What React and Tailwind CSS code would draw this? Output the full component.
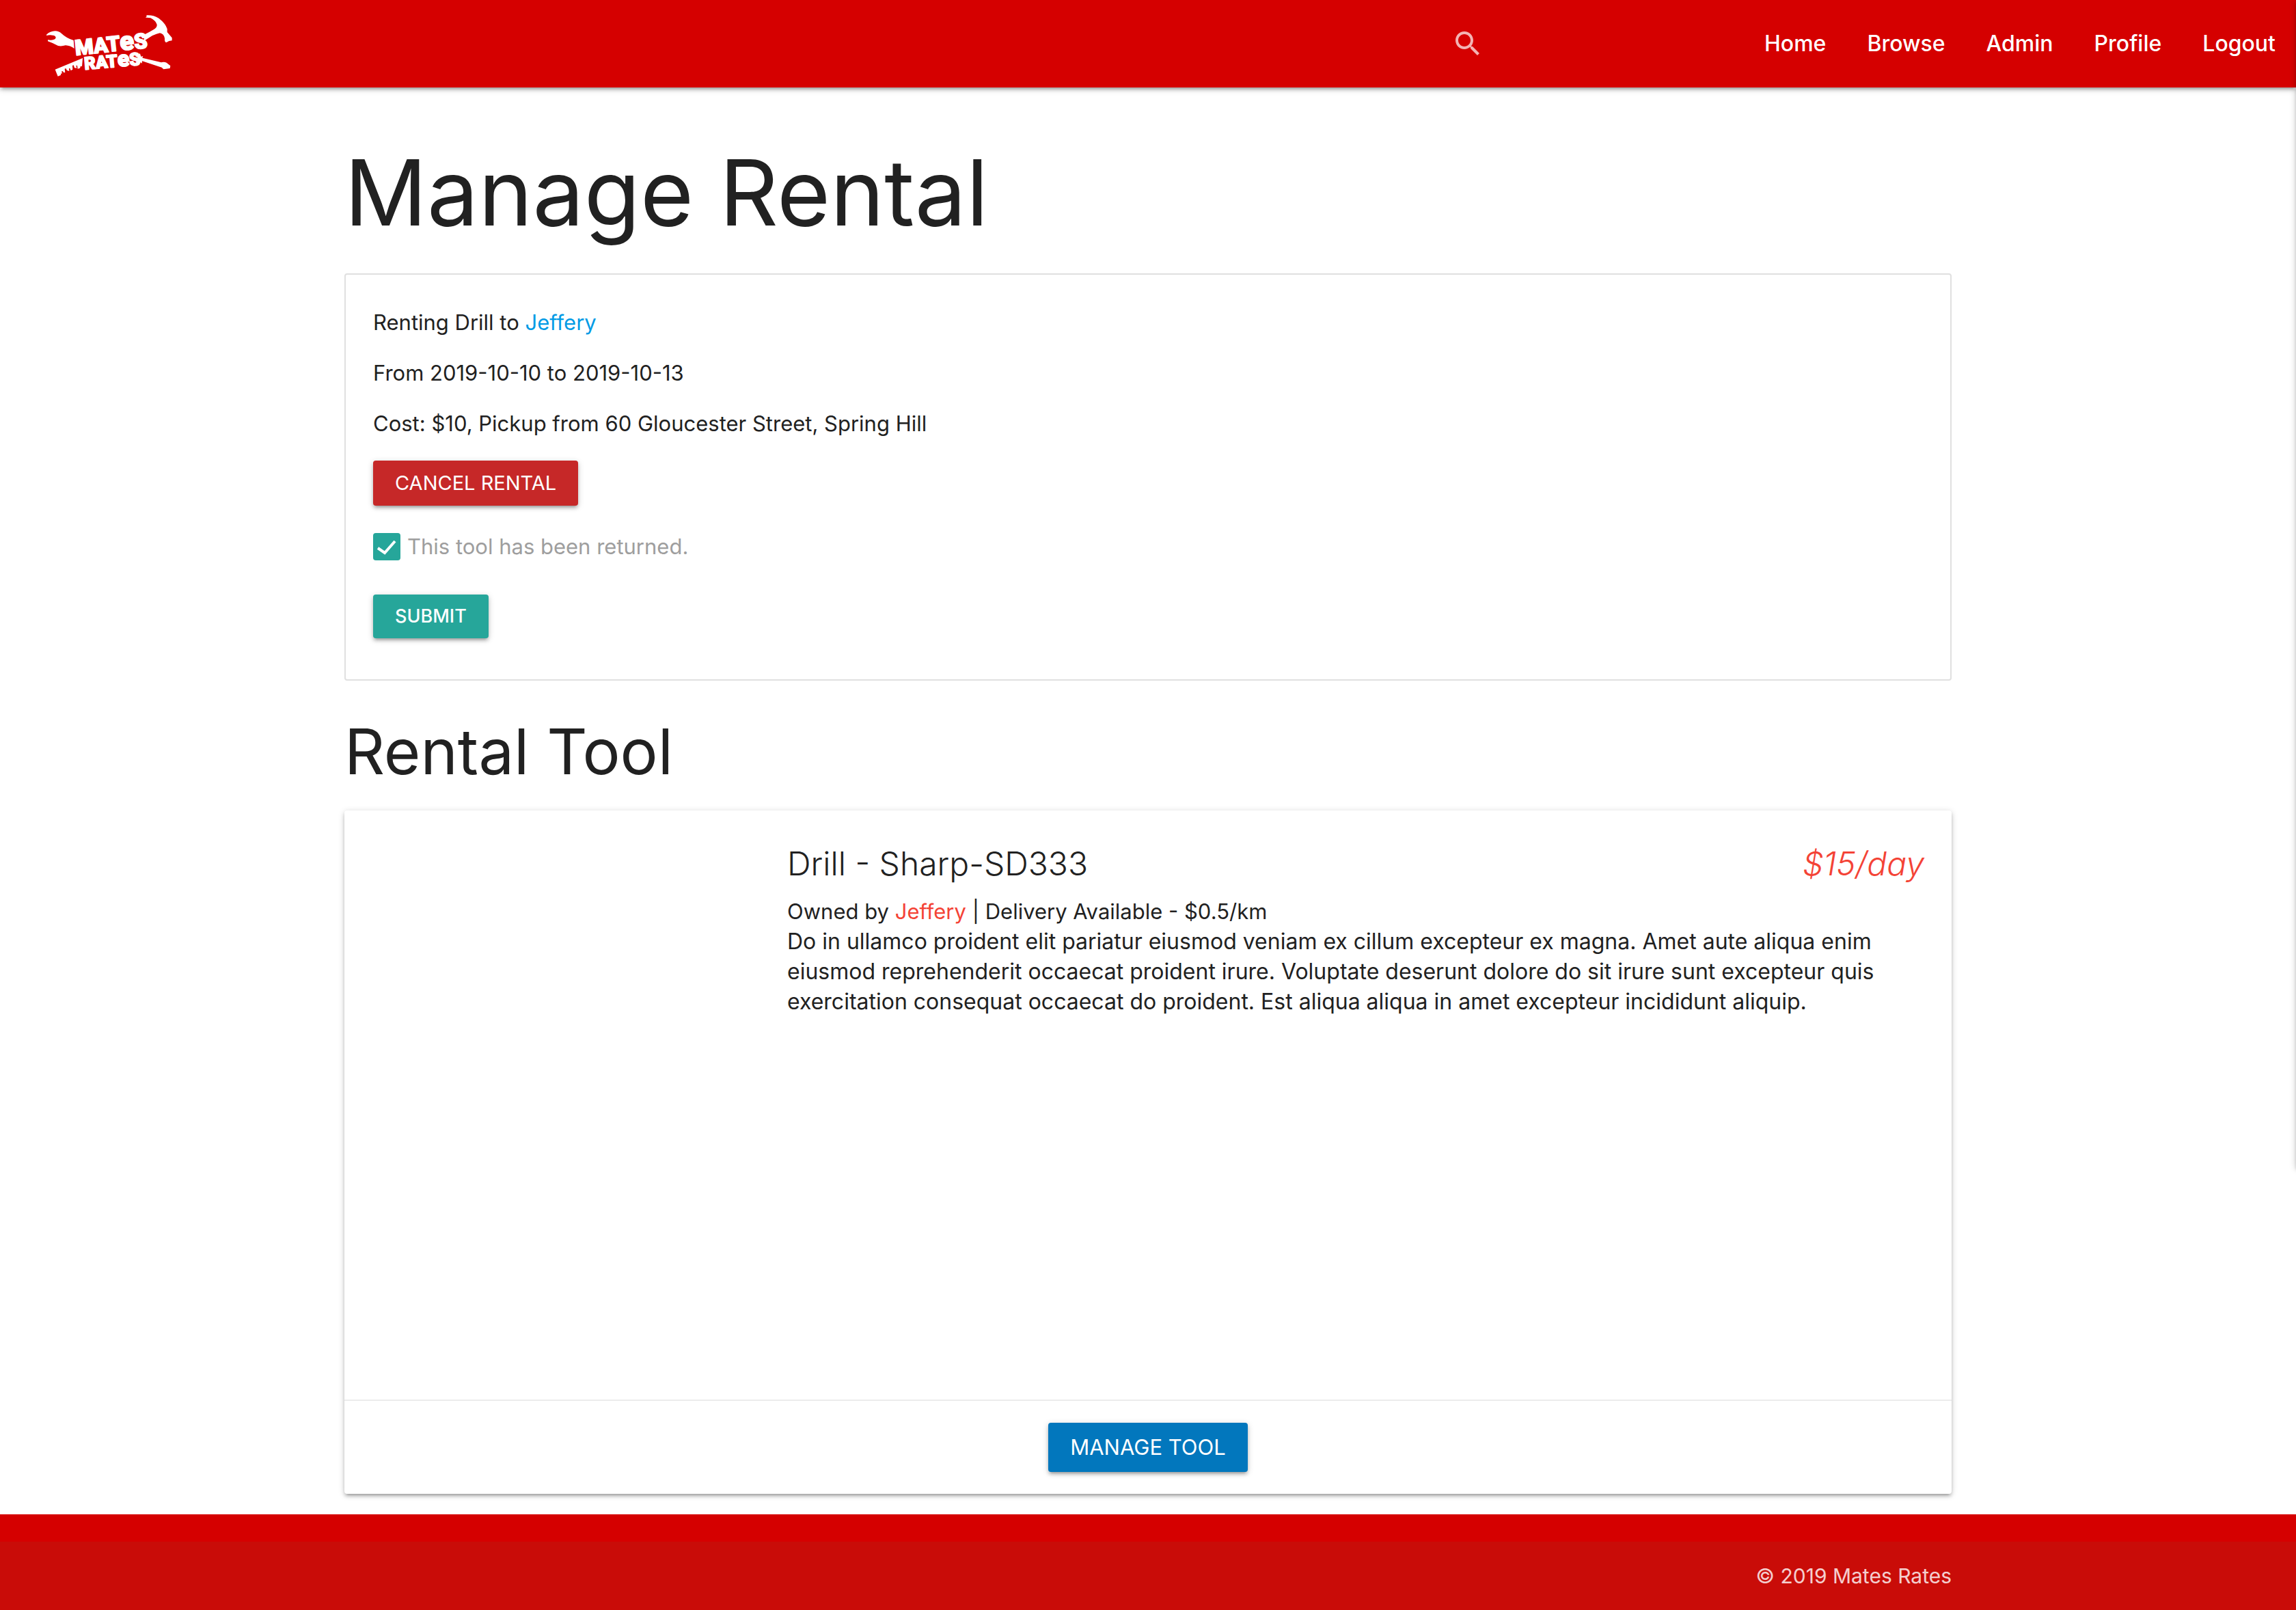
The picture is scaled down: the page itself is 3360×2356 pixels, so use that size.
const navLinks = ["Home", "Browse", "Admin", "Profile", "Logout"];

const raised =
  "shadow-[0_4px_4px_rgba(0,0,0,0.14),0_6px_2px_-4px_rgba(0,0,0,0.12),0_2px_10px_rgba(0,0,0,0.2)]";

function Logo() {
  return (
    <svg viewBox="60 42 600 300" className="h-[100px] w-[200px]" fill="#fff" role="img" aria-label="Mates Rates">
      {/* wrench */}
      <path d="M84 152 Q100 137 122 136 Q138 136 150 147 Q172 168 203 177 L206 213 Q188 200 168 199 Q150 204 135 201 Q110 188 90 181 L90 175 Q105 178 115 174 Q125 171 125 164 Q122 155 112 155 Q98 152 84 156 Z" />
      {/* hammer */}
      <path d="M523 67 Q552 65 577 80 Q607 103 614 127 L614 141 L635 166 L635 178 L622 180 L611 186 Q602 187 603 168 Q600 149 582 145 Q568 148 548 157 L512 180 L513 152 Q537 140 557 128 Q570 120 569 108 Q563 90 541 79 L525 77 L519 77 L524 72 Z" />
      {/* ruler */}
      <path d="M122 305 L243 255 L240 292 L234 290 L231 299 L221 302 L219 287 L214 289 L217 299 L207 298 L203 286 L198 288 L199 305 L191 310 L187 300 L183 300 L184 312 L174 309 L169 300 L164 302 L166 318 L160 319 L155 312 L150 314 L153 322 L146 324 L148 329 L134 335 Z" />
      {/* screwdriver */}
      <path d="M480 245 L490 243 L494 233 L499 248 L508 247 L505 254 L588 274 Q599 270 611 275 L628 289 L626 300 L598 304 L590 296 L504 268 L503 278 L495 272 L490 284 L483 281 L487 262 Z" />
      <g fontFamily="Roboto, sans-serif" fontWeight="900" stroke="#fff" strokeWidth="5" strokeLinejoin="round">
        <text transform="translate(212 243) rotate(-6)" fontSize="93">
          MAT<tspan fontSize="114">e</tspan>S
        </text>
        <text transform="translate(252 306) rotate(-5)" fontSize="77">
          RAT<tspan fontSize="96">e</tspan>S
        </text>
      </g>
    </svg>
  );
}

function Header() {
  return (
    <header className={`relative flex h-32 items-center bg-[#d50000] pl-[60px] text-white ${raised}`}>
      <a href="#home">
        <Logo />
      </a>
      <form className="ml-auto flex w-[428px] items-center">
        <label htmlFor="search" className="shrink-0">
          <svg viewBox="0 0 24 24" className="size-12 fill-white/70" aria-hidden="true">
            <path d="M15.5 14h-.79l-.28-.27C15.41 12.59 16 11.11 16 9.5 16 5.91 13.09 3 9.5 3S3 5.91 3 9.5 5.91 16 9.5 16c1.61 0 3.09-.59 4.23-1.57l.27.28v.79l5 4.99L20.49 19l-4.99-5zm-6 0C7.01 14 5 11.99 5 9.5S7.01 5 9.5 5 14 7.01 14 9.5 11.99 14 9.5 14z" />
          </svg>
        </label>
        <input id="search" type="search" aria-label="Search tools" className="h-16 w-full min-w-0 bg-transparent px-4 outline-none" />
      </form>
      <nav className="flex text-[32px] font-medium">
        {navLinks.map((name) => (
          <a key={name} href={`#${name.toLowerCase()}`} className="px-[30px] leading-[126px]">
            {name}
          </a>
        ))}
      </nav>
    </header>
  );
}

function RentalPanel() {
  return (
    <section className="rounded border-2 border-[#e0e0e0] px-10 pt-12 pb-[60px]">
      <div className="flex flex-col gap-[30px]">
        <p>
          Renting Drill to <a href="#jeffery" className="text-[#039be5]">Jeffery</a>
        </p>
        <p>From 2019-10-10 to 2019-10-13</p>
        <p>Cost: $10, Pickup from 60 Gloucester Street, Spring Hill</p>
      </div>
      <form className="mt-8 flex flex-col items-start">
        <button type="button" className={`h-[66px] rounded bg-[#c62828] px-8 text-[29px] text-white uppercase ${raised}`}>
          Cancel Rental
        </button>
        <label className="mt-10 flex h-10 items-center gap-[10px] text-[#9e9e9e]">
          <span className="grid size-10">
            <input type="checkbox" defaultChecked className="col-start-1 row-start-1 size-10 appearance-none rounded bg-[#26a69a]" />
            <svg viewBox="0 0 40 40" className="pointer-events-none col-start-1 row-start-1 size-10" fill="none" stroke="#fff" strokeWidth="4" aria-hidden="true">
              <path d="M7 22 L17 29 L32 12" />
            </svg>
          </span>
          This tool has been returned.
        </label>
        <button type="submit" className={`mt-[50px] h-16 rounded bg-[#26a69a] px-8 text-[27px] font-medium text-white uppercase ${raised}`}>
          Submit
        </button>
      </form>
    </section>
  );
}

function ToolCard() {
  return (
    <article className={`rounded bg-white ${raised}`}>
      <div className="flex min-h-[862px]">
        <div className="w-1/4" />
        <div className="flex-1 pt-[50px] pr-10 pl-[60px]">
          <div className="flex justify-between text-5xl leading-14 font-light">
            <h3>Drill - Sharp-SD333</h3>
            <em className="text-[#f44336]">$15/day</em>
          </div>
          <p className="mt-5">
            Owned by <a href="#jeffery" className="text-[#f44336]">Jeffery</a> | Delivery Available - $0.5/km
          </p>
          <p className="text-[32px] leading-11">
            Do in ullamco proident elit pariatur eiusmod veniam ex cillum excepteur ex magna. Amet aute aliqua enim
            eiusmod reprehenderit occaecat proident irure. Voluptate deserunt dolore do sit irure sunt excepteur quis
            exercitation consequat occaecat do proident. Est aliqua aliqua in amet excepteur incididunt aliquip.
          </p>
        </div>
      </div>
      <div className="flex justify-center border-t-2 border-[#ececec] py-8">
        <a href="#manage" className={`flex h-[72px] items-center rounded bg-[#0277bd] px-8 text-[31px] text-white uppercase ${raised}`}>
          Manage Tool
        </a>
      </div>
    </article>
  );
}

export default function App() {
  return (
    <div className="relative flex min-h-screen flex-col overflow-hidden bg-white font-['Inter',sans-serif] text-[31px] leading-11 text-[#212121]">
      <Header />
      <main className="mx-auto w-[70%] grow pt-[84px] pb-[30px]">
        <h1 className="mb-[50px] text-[134px] leading-[138px]">Manage Rental</h1>
        <RentalPanel />
        <h2 className="mt-14 mb-[38px] text-[92px] leading-24">Rental Tool</h2>
        <ToolCard />
      </main>
      <footer className="bg-[#d50000] pt-10">
        <div className="bg-[#c90c08]">
          <p className="mx-auto w-[70%] text-right text-[30px] leading-[100px] text-white/80">© 2019 Mates Rates</p>
        </div>
      </footer>
      {/* closed side menu: only its shadow reaches the page edge */}
      <aside className={`absolute top-0 left-full h-[1708px] w-[600px] bg-white ${raised}`} aria-hidden="true" />
    </div>
  );
}
